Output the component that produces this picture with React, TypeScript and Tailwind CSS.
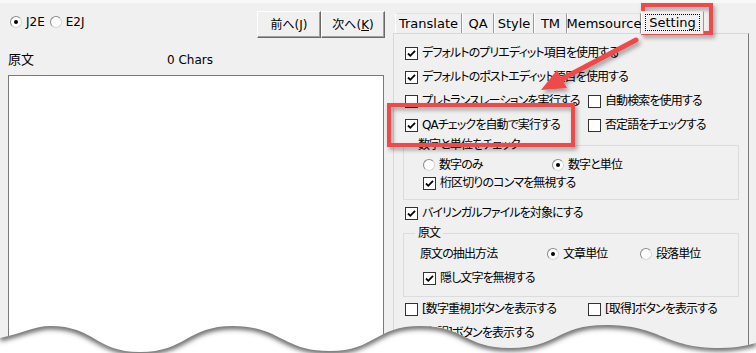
import type { ReactNode } from "react";

const Check = ({ checked }: { checked?: boolean }) => (
  <span className="w-[13px] h-[13px] border border-[#333333] bg-white flex items-center justify-center shrink-0">
    {checked && (
      <svg width="11" height="11" viewBox="0 0 11 11">
        <path d="M2 5.5 L4.3 7.8 L9 2.8" stroke="#000" strokeWidth="1.8" fill="none" />
      </svg>
    )}
  </span>
);

const Radio = ({ on }: { on?: boolean }) => (
  <span className="w-[12px] h-[12px] rounded-full border border-t-[#8a8a8a] border-l-[#8a8a8a] border-r-[#d6d6d6] border-b-[#d6d6d6] bg-white flex items-center justify-center shrink-0">
    {on && <span className="w-[4px] h-[4px] rounded-full bg-black" />}
  </span>
);

const CB = ({ checked, children }: { checked?: boolean; children: ReactNode }) => (
  <label className="flex items-center gap-[4px] whitespace-nowrap">
    <Check checked={checked} />
    <span className="tracking-[-0.9px]">{children}</span>
  </label>
);

const Opt = ({ on, children }: { on?: boolean; children: ReactNode }) => (
  <label className="flex items-center gap-[4px] whitespace-nowrap">
    <Radio on={on} />
    <span className="tracking-[-0.9px]">{children}</span>
  </label>
);

const Row = ({ children, className = "" }: { children: ReactNode; className?: string }) => (
  <div className={`h-[24px] flex items-center pl-[2px] ${className}`}>{children}</div>
);

const Btn = ({ children }: { children: ReactNode }) => (
  <button className="w-[64px] h-[27px] bg-[#f0f0f0] border border-t-white border-l-white border-r-[#696969] border-b-[#696969] shadow-[inset_-1px_-1px_0_#a0a0a0] text-[12px] flex items-center justify-center">
    {children}
  </button>
);

const Tab = ({ w, children }: { w: string; children: ReactNode }) => (
  <div className={`${w} h-[20px] border-t border-l border-r border-t-[#e2e2e2] border-l-white border-r-[#9a9a9a] flex items-center justify-center text-[13px]`}>
    {children}
  </div>
);

const wave =
  "M0,338 C20,334 35,326 50,326 C95,326 95,352 140,352 C186,352 187,326 233,326 C281,326 282,351 330,351 C375,351 375,326 420,326 C465,326 465,348 510,348 C557,348 558,325 605,325 C662,325 663,348 720,348 C738,348 747,345 756,343";

export default function App() {
  return (
    <div className="relative w-[756px] h-[353px] overflow-hidden bg-[#f0f0f0] text-black text-[12px] font-['DejaVu_Sans','Noto_Sans_CJK_JP',sans-serif] [font-feature-settings:'palt']">
      <div className="h-[3px] bg-[#f8f8f8]" />
      <div className="flex h-[350px]">
        {/* left side */}
        <div className="w-[393px] flex flex-col">
          <div className="h-[35px] flex items-start pt-[8px] pr-[8px]">
            <div className="flex items-center pl-[10px] mt-[5px] h-[12px]">
              <Radio on />
              <span className="ml-[4px]">J2E</span>
              <span className="ml-[5px]">
                <Radio />
              </span>
              <span className="ml-[4px]">E2J</span>
            </div>
            <div className="ml-auto flex">
              <Btn>
                前へ(<u>J</u>)
              </Btn>
              <Btn>
                次へ(<u>K</u>)
              </Btn>
            </div>
          </div>
          <div className="h-[37px] flex items-center pl-[8px] pt-[7px]">
            <span className="w-[159px] text-[13px]">原文</span>
            <span>0 Chars</span>
          </div>
          <div className="ml-[8px] w-[376px] flex-1 bg-white border border-[#7a7a7a]" />
        </div>

        {/* right side: tab control */}
        <div className="w-[356px] flex flex-col">
          <div className="h-[30px] flex items-end pl-[2px]">
            <Tab w="w-[67px]">Translate</Tab>
            <Tab w="w-[32px]">QA</Tab>
            <Tab w="w-[40px]">Style</Tab>
            <Tab w="w-[33px]">TM</Tab>
            <Tab w="w-[74px]">Memsource</Tab>
            <div className="w-[63px] h-[23px] -mb-[1px] z-10 bg-[#f0f0f0] border-t border-l border-r border-t-[#e2e2e2] border-l-white border-r-[#9a9a9a] flex items-start justify-center pt-[2px] text-[13px]">
              <span className="border border-dotted border-black px-[3px] leading-[15px]">Setting</span>
            </div>
          </div>
          <div className="flex-1 border-t border-l border-r border-t-[#d8d8d8] border-l-[#d8d8d8] border-r-[#7a7a7a] pl-[9px] pt-[7px]">
            <Row>
              <CB checked>デフォルトのプリエディット項目を使用する</CB>
            </Row>
            <Row>
              <CB checked>デフォルトのポストエディット項目を使用する</CB>
            </Row>
            <Row>
              <div className="w-[183px]">
                <CB>プレトランスレーションを実行する</CB>
              </div>
              <CB>自動検索を使用する</CB>
            </Row>
            <Row>
              <div className="w-[183px]">
                <CB checked>QAチェックを自動で実行する</CB>
              </div>
              <CB>否定語をチェックする</CB>
            </Row>

            <fieldset className="w-[336px] border border-[#dcdcdc] pb-[7px]">
              <legend className="ml-[11px] px-[3px] h-[16px] leading-[16px] tracking-[-0.9px]">数字と単位をチェック</legend>
              <div className="pl-[19px] pt-[3px]">
                <div className="h-[18px] flex items-center">
                  <div className="w-[129px]">
                    <Opt>数字のみ</Opt>
                  </div>
                  <Opt on>数字と単位</Opt>
                </div>
                <div className="h-[18px] flex items-center">
                  <CB checked>桁区切りのコンマを無視する</CB>
                </div>
              </div>
            </fieldset>

            <Row className="mt-[1px]">
              <CB checked>バイリンガルファイルを対象にする</CB>
            </Row>

            <fieldset className="w-[336px] border border-[#dcdcdc] pb-[8px]">
              <legend className="ml-[11px] px-[3px] h-[16px] leading-[16px] tracking-[-0.9px]">原文</legend>
              <div className="pl-[16px] pt-[3px]">
                <div className="h-[20px] flex items-center">
                  <span className="w-[127px] tracking-[-0.9px]">原文の抽出方法</span>
                  <div className="w-[93px]">
                    <Opt on>文章単位</Opt>
                  </div>
                  <Opt>段落単位</Opt>
                </div>
                <div className="h-[20px] mt-[4px] flex items-center pl-[3px]">
                  <CB checked>隠し文字を無視する</CB>
                </div>
              </div>
            </fieldset>

            <Row>
              <div className="w-[183px]">
                <CB>[数字重視]ボタンを表示する</CB>
              </div>
              <CB>[取得]ボタンを表示する</CB>
            </Row>
            <Row>
              <CB>[翻訳]ボタンを表示する</CB>
            </Row>
          </div>
        </div>
      </div>

      {/* annotations: red boxes and arrow */}
      <svg className="absolute left-0 top-0 pointer-events-none" width="756" height="353">
        <defs>
          <filter id="sh" x="-20%" y="-20%" width="140%" height="140%">
            <feDropShadow dx="2" dy="3" stdDeviation="2" floodColor="#000" floodOpacity="0.35" />
          </filter>
        </defs>
        <g filter="url(#sh)">
          <rect x="643" y="5" width="68" height="28" fill="none" stroke="#f04848" strokeWidth="4" />
          <rect x="389" y="105" width="184" height="40" fill="none" stroke="#f04848" strokeWidth="4" />
          <line x1="636" y1="40" x2="560" y2="80" stroke="#f04848" strokeWidth="5" strokeLinecap="round" />
          <polygon points="541,90 567,88 557,70" fill="#f04848" />
        </g>
      </svg>

      {/* torn paper edge */}
      <svg className="absolute left-0 top-0 pointer-events-none" width="756" height="353">
        <defs>
          <clipPath id="tear">
            <path d={`${wave} L756,353 L0,353 Z`} />
          </clipPath>
          <filter id="blur">
            <feGaussianBlur stdDeviation="2.4" />
          </filter>
        </defs>
        <path d={`${wave} L756,353 L0,353 Z`} fill="#ffffff" />
        <g clipPath="url(#tear)">
          <path d={wave} fill="none" stroke="#5c5c5c" strokeWidth="6" filter="url(#blur)" />
        </g>
      </svg>
    </div>
  );
}
